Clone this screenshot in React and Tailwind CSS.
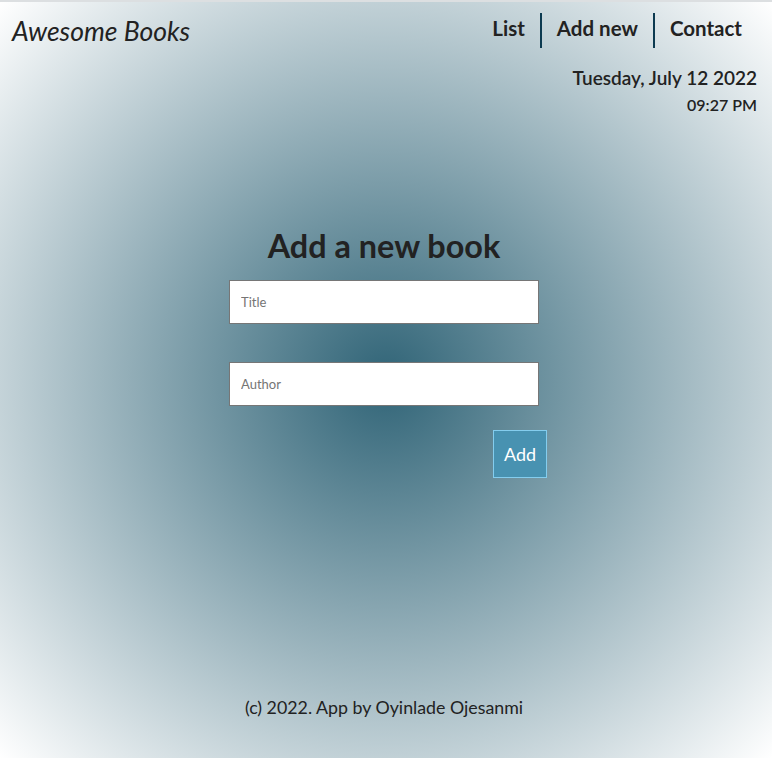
export default function App() {
  return (
    <div className="min-h-[758px] w-full border-t-2 border-[#dcdfe1] bg-[radial-gradient(circle,#306477_0%,#ffffff_100%)] font-['Lato',sans-serif] text-[#222] flex flex-col">
      <header className="flex items-start justify-between pl-3 pr-[15px] pt-[11px]">
        <h1 className="text-[26.5px] italic leading-none mt-[5px] text-[#222]">Awesome Books</h1>
        <nav>
          <ul className="flex items-stretch">
            <li className="px-[15px] pt-[3px] pb-[7px] text-[20.5px] font-bold leading-[25px]">List</li>
            <li className="border-l-2 border-[#0c3a50] px-[15px] pt-[3px] pb-[7px] text-[20.5px] font-bold leading-[25px]">Add new</li>
            <li className="border-l-2 border-[#0c3a50] pl-[15px] pr-[15px] pt-[3px] pb-[7px] text-[20.5px] font-bold leading-[25px]">Contact</li>
          </ul>
        </nav>
      </header>
      <div className="flex flex-col items-end pr-[15px] mt-[18px]">
        <p className="text-[19px] font-semibold leading-[23px]">Tuesday, July 12 2022</p>
        <p className="text-[16px] font-semibold leading-[20px] mt-[6px]">09:27 PM</p>
      </div>
      <main className="flex flex-col items-center mt-[111px]">
        <h2 className="text-[32.4px] font-bold leading-[40px] mr-[4px]">Add a new book</h2>
        <form className="flex flex-col w-[318px] mt-[14px] ml-[4px]">
          <input
            type="text"
            placeholder="Title"
            className="w-[310px] h-[44px] bg-white border border-[#767676] px-[11px] text-[13px] text-[#222] placeholder:text-[#757575] outline-none"
          />
          <input
            type="text"
            placeholder="Author"
            className="w-[310px] h-[44px] bg-white border border-[#767676] px-[11px] text-[13px] text-[#222] placeholder:text-[#757575] outline-none mt-[38px]"
          />
          <div className="flex justify-end mt-[24px]">
            <button
              type="button"
              className="w-[54px] h-[48px] bg-[#4892b1] border border-[#84cdee] text-white text-[18px] leading-none"
            >
              Add
            </button>
          </div>
        </form>
      </main>
      <footer className="mt-auto mb-[40px] pr-[4px] text-center text-[17.8px] leading-[22px] text-[#222]">
        (c) 2022. App by Oyinlade Ojesanmi
      </footer>
    </div>
  );
}
